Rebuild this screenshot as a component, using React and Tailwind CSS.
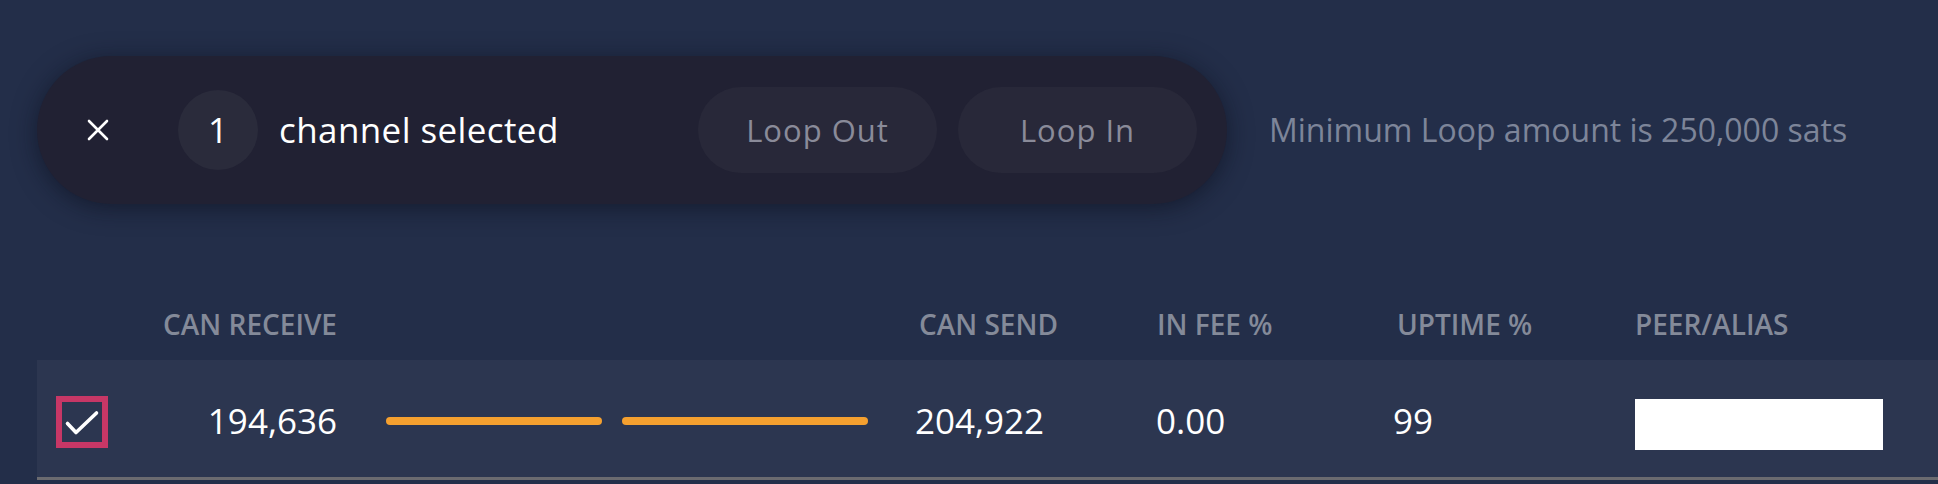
import React from 'react';

const font = { fontFamily: '"Open Sans", "Noto Sans", sans-serif' };

function CloseIcon() {
  return (
    <svg width="22" height="22" viewBox="0 0 22 22" fill="none" stroke="#ffffff" strokeWidth="2.6" strokeLinecap="round">
      <path d="M2 2 L20 20 M20 2 L2 20" />
    </svg>
  );
}

function Check() {
  return (
    <svg width="40" height="40" viewBox="0 0 40 40" fill="none" stroke="#ffffff" strokeWidth="3.6" strokeLinecap="round" strokeLinejoin="round">
      <path d="M5.5 21.5 L14 30.5 L34.5 11" />
    </svg>
  );
}

function ActionButton({ children }) {
  return (
    <button className="w-[239px] h-[86px] rounded-full bg-[#282839] text-[#8a8b99] text-[31px] font-medium tracking-[1px]">
      {children}
    </button>
  );
}

export default function App() {
  const headers = [
    { label: 'CAN SEND', w: 'w-[241px]', pad: 'pl-[4px]' },
    { label: 'IN FEE %', w: 'w-[237px]', pad: 'pl-[1px]' },
    { label: 'UPTIME %', w: 'w-[242px]', pad: 'pl-[4px]' },
    { label: 'PEER/ALIAS', w: 'w-[240px]', pad: '' },
  ];

  return (
    <div className="w-[1938px] h-[484px] bg-[#232e49] overflow-hidden" style={font}>
      <div className="flex items-center pt-[56px] pl-[37px]">
        <div className="w-[1190px] h-[148px] rounded-full bg-[#212133] shadow-[0_4px_24px_rgba(10,12,25,0.55)] flex items-center pl-[50px] pr-[30px]">
          <CloseIcon />
          <div className="ml-[69px] w-[80px] h-[80px] rounded-full bg-[#2a2b3b] flex items-center justify-center text-white text-[35px]">
            1
          </div>
          <span className="ml-[21px] text-white text-[35px] tracking-[0.4px]">channel selected</span>
          <div className="ml-auto flex gap-[21px]">
            <ActionButton>Loop Out</ActionButton>
            <ActionButton>Loop In</ActionButton>
          </div>
        </div>
        <span className="ml-[42px] text-[#7d8599] text-[32px]">Minimum Loop amount is 250,000 sats</span>
      </div>

      <div className="mt-[84px] h-[72px] flex items-center pl-[37px] text-[#848a99] text-[28px] font-semibold">
        <div className="w-[113px]" />
        <div className="w-[187px] text-right">CAN RECEIVE</div>
        <div className="w-[578px]" />
        {headers.map((h) => (
          <div key={h.label} className={`${h.w} ${h.pad}`}>{h.label}</div>
        ))}
      </div>

      <div className="ml-[37px] h-[120px] pt-[6px] bg-[#2c3650] border-b-[3px] border-[#6b6b70] flex items-center text-white text-[35px]">
        <div className="w-[113px] pl-[19px]">
          <div className="w-[52px] h-[52px] border-[6px] border-[#c73766] flex items-center justify-center">
            <Check />
          </div>
        </div>
        <div className="w-[187px] text-right">194,636</div>
        <div className="w-[578px] flex items-center gap-[20px] pl-[49px] pr-[47px] pb-[2px]">
          <div className="w-[216px] h-[8px] rounded-full bg-[#f5a02f]" />
          <div className="flex-1 h-[8px] rounded-full bg-[#f5a02f]" />
        </div>
        <div className="w-[241px]">204,922</div>
        <div className="w-[237px]">0.00</div>
        <div className="w-[242px]">99</div>
        <div className="w-[248px] h-[51px] mt-[5px] bg-white" />
      </div>
    </div>
  );
}
